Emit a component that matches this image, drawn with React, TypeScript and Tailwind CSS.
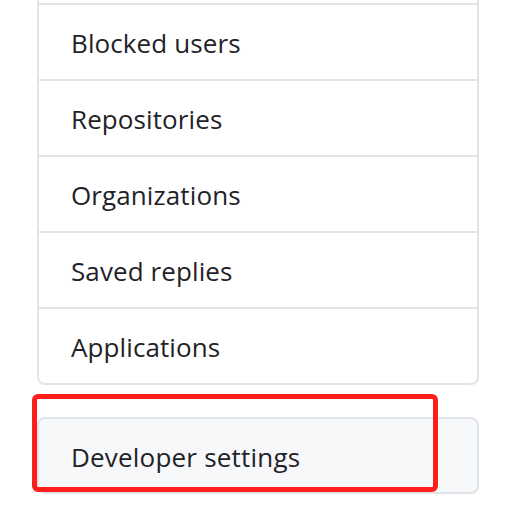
const items = ["Blocked users", "Repositories", "Organizations", "Saved replies", "Applications"];

export default function App() {
  return (
    <div
      className="relative w-[512px] h-[512px] overflow-hidden bg-white text-[#1f2328]"
      style={{ fontFamily: '"Open Sans", "Noto Sans", sans-serif' }}
    >
      <div className="pl-[37px] pr-[33px]">
        <ul className="-mt-[73px] border-2 border-[#e1e4e8] rounded-[8px]">
          {/* previous row, scrolled out of view */}
          <li className="h-[74px]" />
          {items.map((name) => (
            <li
              key={name}
              className="h-[76px] border-t-2 border-[#e1e4e8] flex items-center pl-[32px] pt-[2px] text-[26px] tracking-[0.1px]"
            >
              {name}
            </li>
          ))}
        </ul>
        <div className="mt-8 h-[77px] border-2 border-[#e1e4e8] rounded-[8px] bg-[#f6f8fa] flex items-center pl-[32px] pt-[3px] text-[26px] tracking-[0.2px]">
          Developer settings
        </div>
      </div>
      {/* highlight annotation */}
      <div className="absolute left-[32px] top-[394px] w-[406px] h-[98px] border-[5px] border-[#ff1f1a] rounded-[6px]" />
    </div>
  );
}
